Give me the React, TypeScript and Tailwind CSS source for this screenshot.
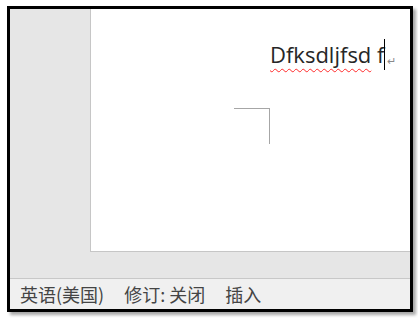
export default function App() {
  return (
    <div className="w-[418px] h-[318px] bg-white pt-[6px] pl-[7px]">
      {/* Window frame */}
      <div className="w-[406px] h-[306px] border-[3px] border-black flex flex-col shadow-[3px_3px_3px_rgba(0,0,0,0.35)]">
        {/* Document area */}
        <div className="h-[270px] bg-[#e6e6e6] border-b border-[#c8c8c8] pl-[80px]">
          <div
            className="h-[243px] bg-white border-l border-b border-[#c6c6c6] flex flex-col"
            style={{ fontFamily: '"Open Sans", "Noto Sans", sans-serif' }}
          >
            <div className="pt-[30px] pl-[179px] flex items-start">
              <span className="text-[22px] leading-[31px] text-[#262626] whitespace-pre">
                <span className="underline decoration-wavy decoration-[#ff2a2a] decoration-1 underline-offset-[5px]">
                  Dfksdljfsd
                </span>{" "}
                f
              </span>
              <span className="w-px h-[31px] bg-black" />
              <span className="text-[11px] leading-none text-[#8a8a8a] ml-[2px] mt-[16px]">↵</span>
            </div>
            <div className="ml-[143px] mt-[38px] w-[36px] h-[36px] border-t border-r border-[#a6a6a6]" />
          </div>
        </div>
        {/* Status bar */}
        <div
          className="flex-1 bg-[#f0f0f0] flex items-center pl-[10px] gap-[20px] text-[18px] text-[#444444]"
          style={{ fontFamily: '"Noto Sans CJK SC", sans-serif' }}
        >
          <span>英语(美国)</span>
          <span>修订: 关闭</span>
          <span>插入</span>
        </div>
      </div>
    </div>
  );
}
